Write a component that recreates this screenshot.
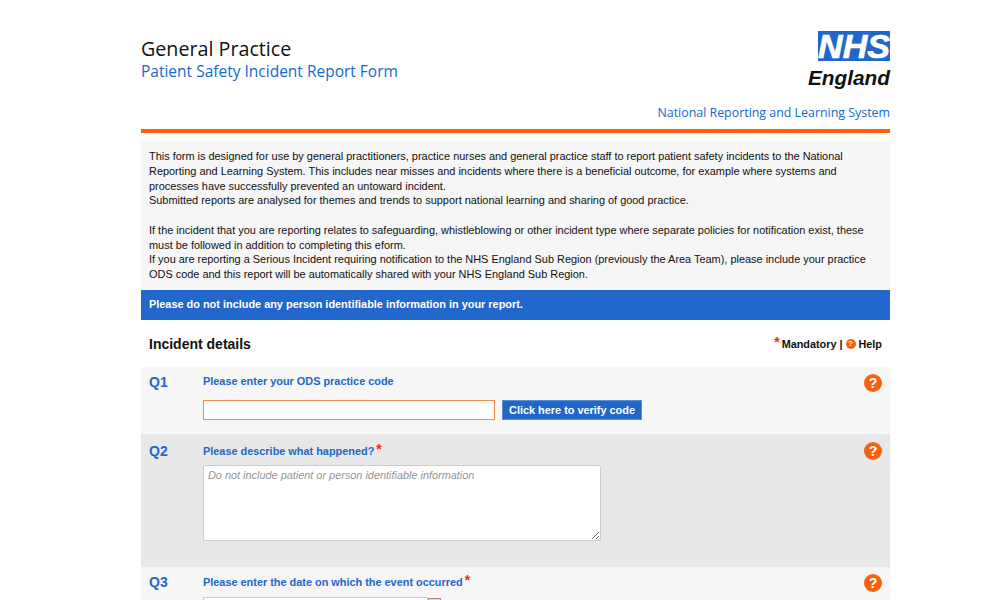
<style>
:global(body) { margin: 0; background: #fff; }
.page { height: 600px; overflow: hidden; font-family: "Liberation Sans", Arial, sans-serif; color: #111; }
.wrap { width: 749px; margin-left: 141px; }
.head { height: 129px; display: flex; justify-content: space-between; box-sizing: border-box; }
.titles { padding-top: 36px; font-family: "Open Sans", sans-serif; }
h1 { margin: 0; font-weight: 400; font-size: 19.7px; line-height: 26px; color: #111; }
h2 { margin: 0; font-weight: 400; font-size: 15.5px; line-height: 18px; color: #1469cc; }
.brand { display: flex; flex-direction: column; align-items: flex-end; padding-top: 31px; }
.nhs { width: 72px; height: 30px; background: #2167c9; color: #fff; font: italic 700 34px/30px "Liberation Sans", sans-serif; text-align: center; -webkit-text-stroke: 0.7px #fff; }
.eng { font: italic 700 20.8px/26px "Liberation Sans", sans-serif; color: #111; margin-top: 4px; }
.nrls { font: 400 12.4px/16px "Open Sans", sans-serif; color: #1469cc; margin-top: 14px; }
.rule { height: 4px; background: #f9610d; }
.intro { margin-top: 8px; height: 149px; box-sizing: border-box; background: #f6f6f6; padding: 8px 8px 0; font-size: 10.93px; line-height: 14.75px; }
.intro p { margin: 0 0 14.75px; }
.warn { height: 30px; background: #2267cb; color: #fff; font-weight: 700; font-size: 10.92px; line-height: 28px; padding-left: 8px; }
.sect { height: 47px; display: flex; justify-content: space-between; align-items: center; padding: 0 8px; }
h3 { margin: 0; font-size: 14px; font-weight: 700; color: #111; }
.key { display: flex; align-items: center; gap: 3px; font-size: 10.85px; font-weight: 700; }
.key .star { font-size: 14px; line-height: 10px; margin-top: -4px; margin-right: -1px; }
.star { color: #f22; font-weight: 700; }
.mini { width: 10px; height: 10px; border-radius: 50%; background: #f9610d; color: #fff; font-size: 8px; line-height: 10px; text-align: center; }
.q { display: grid; grid-template-columns: 54px 1fr 26px; padding-left: 8px; box-sizing: border-box; }
.q1 { height: 67px; background: #f6f6f6; }
.q2 { height: 133px; background: #e8e8e8; }
.q3 { height: 100px; background: #f6f6f6; }
.num { font-size: 14px; font-weight: 700; color: #2167c9; padding-top: 7px; line-height: 17px; }
.q2 .num { padding-top: 9px; }
.label { font-size: 10.9px; font-weight: 700; color: #2167c9; line-height: 14px; padding-top: 7px; display: flex; }
.q2 .label { padding-top: 10px; }
.q3 .label { padding-top: 8px; }
.label .star { font-size: 14px; line-height: 11px; margin-left: 2px; }
.help { width: 18px; height: 18px; border-radius: 50%; background: #f9610d; color: #fff; font-weight: 700; font-size: 14px; line-height: 18px; text-align: center; margin-top: 7px; }
.q2 .help { margin-top: 8px; }
.row { display: flex; gap: 7px; margin-top: 12px; }
.code { width: 292px; height: 20px; box-sizing: border-box; background: #fff; border: 1px solid #f58a52; padding: 0; }
.verify { height: 20px; width: 140px; box-sizing: border-box; background: #2167c9; color: #fff; border: 1px solid #5a90d8; font: 700 10.9px "Liberation Sans", sans-serif; padding: 0; }
textarea { display: block; width: 398px; height: 76px; box-sizing: border-box; margin-top: 7px; border: 1px solid #ccc; border-radius: 2px; background: #fff; padding: 2px 4px; font: italic 10.9px/15px "Liberation Sans", sans-serif; }
textarea::placeholder { color: #959595; opacity: 1; }
.date { display: flex; margin-top: 8px; }
.date input { width: 225px; height: 20px; box-sizing: border-box; border: 1px solid #ccc; background: #fff; padding: 0; }
.cal { width: 13px; height: 13px; box-sizing: border-box; margin-top: 1px; border: 1px solid #b08a84; background: #e6d5d2; }
</style>

<div class="page">
  <div class="wrap">
    <header class="head">
      <div class="titles">
        <h1>General Practice</h1>
        <h2>Patient Safety Incident Report Form</h2>
      </div>
      <div class="brand">
        <div class="nhs">NHS</div>
        <div class="eng">England</div>
        <div class="nrls">National Reporting and Learning System</div>
      </div>
    </header>
    <div class="rule"></div>
    <section class="intro">
      <p>This form is designed for use by general practitioners, practice nurses and general practice staff to report patient safety incidents to the National Reporting and Learning System. This includes near misses and incidents where there is a beneficial outcome, for example where systems and processes have successfully prevented an untoward incident.<br />Submitted reports are analysed for themes and trends to support national learning and sharing of good practice.</p>
      <p>If the incident that you are reporting relates to safeguarding, whistleblowing or other incident type where separate policies for notification exist, these must be followed in addition to completing this eform.<br />If you are reporting a Serious Incident requiring notification to the NHS England Sub Region (previously the Area Team), please include your practice ODS code and this report will be automatically shared with your NHS England Sub Region.</p>
    </section>
    <div class="warn">Please do not include any person identifiable information in your report.</div>
    <div class="sect">
      <h3>Incident details</h3>
      <div class="key"><span class="star">*</span><span>Mandatory |</span><span class="mini">?</span><span>Help</span></div>
    </div>
    <div class="q q1">
      <div class="num">Q1</div>
      <div>
        <div class="label">Please enter your ODS practice code</div>
        <div class="row"><input class="code" type="text" /><button class="verify">Click here to verify code</button></div>
      </div>
      <div class="help">?</div>
    </div>
    <div class="q q2">
      <div class="num">Q2</div>
      <div>
        <div class="label">Please describe what happened?<span class="star">*</span></div>
        <textarea placeholder="Do not include patient or person identifiable information"></textarea>
      </div>
      <div class="help">?</div>
    </div>
    <div class="q q3">
      <div class="num">Q3</div>
      <div>
        <div class="label">Please enter the date on which the event occurred<span class="star">*</span></div>
        <div class="date"><input type="text" /><span class="cal"></span></div>
      </div>
      <div class="help">?</div>
    </div>
  </div>
</div>
